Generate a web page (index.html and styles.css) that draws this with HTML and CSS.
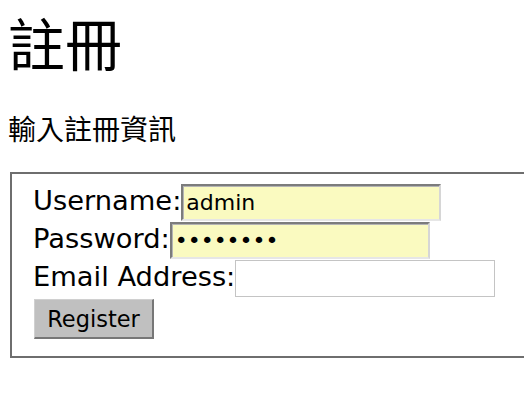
FILE: index.html
```html
<!DOCTYPE html>
<html lang="zh-Hant">
<head>
<meta charset="utf-8">
<title>註冊</title>
<link rel="stylesheet" href="styles.css">
</head>
<body>
<h1 class="title">註冊</h1>
<p class="subtitle">輸入註冊資訊</p>
<form class="form">
  <div class="box">
    <div class="row">
      <label class="label" for="username">Username:</label><input class="field field-filled" id="username" type="text" value="admin">
    </div>
    <div class="row">
      <label class="label" for="password">Password:</label><input class="field field-filled" id="password" type="password" value="12345678">
    </div>
    <div class="row">
      <label class="label" for="email">Email Address:</label><input class="field field-plain" id="email" type="text" value="">
    </div>
    <div class="actions">
      <button class="btn" type="button">Register</button>
    </div>
  </div>
</form>
</body>
</html>
```
FILE: styles.css
```css
body {
  margin: 8px;
  background: #fff;
  color: #000;
  font-family: "Noto Sans CJK TC", "Noto Sans", sans-serif;
}
.title {
  margin: 1px 0 0 0;
  font-size: 57px;
  line-height: 64px;
  font-weight: normal;
}
.subtitle {
  margin: 39px 0 0 0;
  font-size: 28px;
  line-height: 32px;
}
.form {
  margin: 28px 0 0 0;
}
.box {
  margin: 0 -8px 0 2px;
  border-top: 2px solid #6e6e6e;
  border-bottom: 2px solid #6e6e6e;
  border-left: 2px solid #6e6e6e;
  padding: 10px 21px 17px 21px;
  display: flex;
  flex-direction: column;
  gap: 1px;
}
.row {
  display: flex;
  align-items: baseline;
}
.label {
  font-family: "DejaVu Sans", "Noto Sans", sans-serif;
  font-size: 27.3px;
  line-height: 31px;
  color: #000;
}
.field {
  box-sizing: border-box;
  width: 260px;
  height: 37px;
  margin: 0;
  padding: 0 3px;
  font-family: "DejaVu Sans", Verdana, sans-serif;
  font-size: 22px;
  color: #000;
  outline: none;
}
.field-filled {
  background: #fafac0;
  border-style: solid;
  border-width: 2px;
  border-color: #7c7c7c #d6d6d6 #e6e6e6 #7c7c7c;
  box-shadow: inset 1px 1px 0 #b4b4b4;
}
.field-plain {
  background: #fff;
  border: 1px solid #c4c4c4;
}
.actions {
  display: flex;
  margin-top: 1px;
  padding-left: 1px;
}
.btn {
  box-sizing: border-box;
  width: 120px;
  height: 40px;
  margin: 0;
  padding: 0;
  background: #c0c0c0;
  border-style: solid;
  border-width: 1px 2px 2px 1px;
  border-color: #d0d0d0 #777 #777 #d0d0d0;
  font-family: "DejaVu Sans", Verdana, sans-serif;
  font-size: 22.5px;
  color: #000;
}
```
